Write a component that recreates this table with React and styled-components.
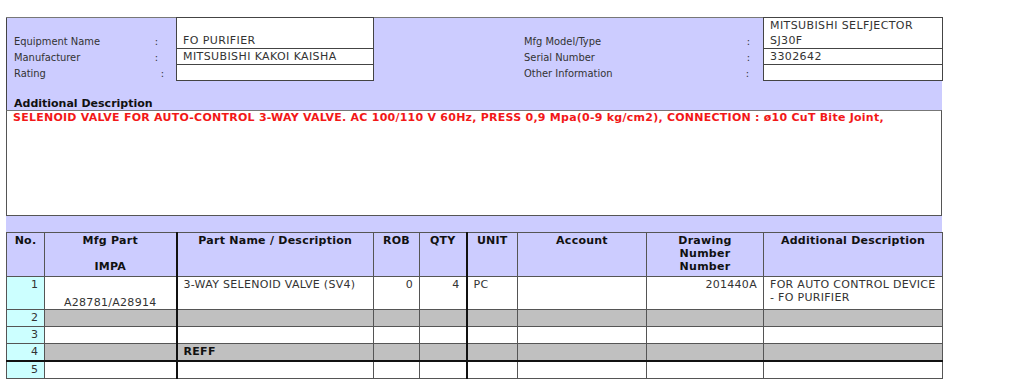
import styled, { createGlobalStyle } from "styled-components";

const GlobalStyle = createGlobalStyle`
  body {
    margin: 0;
    background: #fff;
    font-family: "DejaVu Sans", Verdana, sans-serif;
    font-size: 11px;
    color: #333;
  }
`;

const LAVENDER = "#ccccff";
const LINE = "#444";

const Page = styled.div`
  padding: 17px 0 0 6px;
  width: 936px;
`;

const InfoTable = styled.table`
  width: 936px;
  border-collapse: collapse;
  table-layout: fixed;
  background: ${LAVENDER};
  border-top: 1px solid #777;
  border-left: 1px solid ${LINE};
  td {
    padding: 0;
    vertical-align: bottom;
    line-height: 15px;
  }
`;

const LabelCell = styled.td`
  padding: 0 ${(p) => p.$colonPad || 18}px 0 ${(p) => p.$indent || 7}px !important;
  font-family: "DejaVu Sans Condensed", "DejaVu Sans", sans-serif;
  span {
    display: flex;
    justify-content: space-between;
  }
`;

const ValueCell = styled.td`
  background: #fff;
  border: 1px solid ${LINE};
  padding: 0 0 0 6px !important;
  height: ${(p) => p.$h || 15}px;
  letter-spacing: 0.4px;
`;

const DescHeader = styled.div`
  background: ${LAVENDER};
  border-left: 1px solid ${LINE};
  height: 29px;
  display: flex;
  align-items: flex-end;
  padding-left: 7px;
  font-weight: bold;
  color: #111;
`;

const DescBox = styled.div`
  height: 104px;
  border: 1px solid #555;
  border-top-color: #777;
  padding: 0 6px;
  color: #f21818;
  font-weight: bold;
  line-height: 13px;
  letter-spacing: 0.25px;
`;

const Band = styled.div`
  background: ${LAVENDER};
  height: 16px;
`;

const PartsTable = styled.table`
  width: 937px;
  border-collapse: collapse;
  table-layout: fixed;
  th, td {
    border: 1px solid #555;
    padding: 1px 6px;
    line-height: 13px;
    vertical-align: top;
    overflow: hidden;
    white-space: nowrap;
  }
`;

const HeadCell = styled.th`
  background: ${LAVENDER};
  color: #111;
  font-weight: bold;
  text-align: center;
  height: 41px;
  letter-spacing: 0.25px;
  border-left: ${(p) => (p.$thick ? "2px solid #111" : undefined)} !important;
`;

const Row = styled.tr`
  background: ${(p) => (p.$grey ? "#c0c0c0" : "#fff")};
  td {
    height: ${(p) => p.$h || 14}px;
  }
  ${(p) => p.$thickTop && `td { border-top: 2px solid #111; }`}
`;

const NoCell = styled.td`
  background: #ccffff;
  text-align: right;
`;

const Cell = styled.td`
  text-align: ${(p) => p.$align || "left"};
  font-weight: ${(p) => (p.$bold ? "bold" : "normal")};
  color: ${(p) => (p.$bold ? "#111" : "#333")};
  letter-spacing: 0.3px;
  border-left: ${(p) => (p.$thick ? "2px solid #111" : undefined)} !important;
`;

/* part number sits low in its cell, under an empty first line */
const PartNoCell = styled(Cell)`
  tr & {
    padding: ${(p) => (p.$drop ? "19px 6px 0" : "1px 6px")};
    height: ${(p) => (p.$drop ? "13px" : undefined)};
  }
`;

const Colon = styled.i`
  font-style: normal;
`;

const columns = [38, 132, 197, 46, 47, 51, 129, 117, 179];

const rows = [
  {
    no: 1,
    mfg: "A28781/A28914",
    name: "3-WAY SELENOID VALVE (SV4)",
    rob: "0",
    qty: "4",
    unit: "PC",
    drawing: "201440A",
    extra: ["FOR AUTO CONTROL DEVICE", "- FO PURIFIER"],
    h: 30,
  },
  { no: 2, grey: true },
  { no: 3 },
  { no: 4, grey: true, name: "REFF", bold: true },
  { no: 5, thickTop: true },
];

const info = [
  ["Equipment Name", "FO PURIFIER", "Mfg Model/Type", ["MITSUBISHI SELFJECTOR", "SJ30F"], 18, 13, 28],
  ["Manufacturer", "MITSUBISHI KAKOI KAISHA", "Serial Number", ["3302642"], 18, 13, 15],
  ["Rating", "", "Other Information", [], 12, 14, 15],
];

export default function App() {
  return (
    <>
      <GlobalStyle />
      <Page>
        <InfoTable>
          <colgroup>
            <col style={{ width: 170 }} />
            <col style={{ width: 197 }} />
            <col style={{ width: 390 }} />
            <col style={{ width: 179 }} />
          </colgroup>
          <tbody>
            {info.map(([l1, v1, l2, v2, pad1, pad2, h]) => (
              <tr key={l1}>
                <LabelCell $colonPad={pad1}>
                  <span>
                    {l1}
                    <Colon>:</Colon>
                  </span>
                </LabelCell>
                <ValueCell $h={h}>{v1}</ValueCell>
                <LabelCell $indent={150} $colonPad={pad2}>
                  <span>
                    {l2}
                    <Colon>:</Colon>
                  </span>
                </LabelCell>
                <ValueCell $h={h}>
                  {v2.map((t) => (
                    <div key={t}>{t}</div>
                  ))}
                </ValueCell>
              </tr>
            ))}
          </tbody>
        </InfoTable>

        <DescHeader>Additional Description</DescHeader>
        <DescBox>
          SELENOID VALVE FOR AUTO-CONTROL 3-WAY VALVE. AC 100/110 V 60Hz, PRESS
          0,9 Mpa(0-9 kg/cm2), CONNECTION : ø10 CuT Bite Joint,
        </DescBox>
        <Band />

        <PartsTable>
          <colgroup>
            {columns.map((w, i) => (
              <col key={i} style={{ width: w }} />
            ))}
          </colgroup>
          <thead>
            <tr>
              <HeadCell>No.</HeadCell>
              <HeadCell>
                Mfg Part
                <br />
                <br />
                IMPA
              </HeadCell>
              <HeadCell $thick>Part Name / Description</HeadCell>
              <HeadCell>ROB</HeadCell>
              <HeadCell>QTY</HeadCell>
              <HeadCell $thick>UNIT</HeadCell>
              <HeadCell>Account</HeadCell>
              <HeadCell>
                Drawing
                <br />
                Number
                <br />
                Number
              </HeadCell>
              <HeadCell>Additional Description</HeadCell>
            </tr>
          </thead>
          <tbody>
            {rows.map((r) => (
              <Row key={r.no} $grey={r.grey} $h={r.h} $thickTop={r.thickTop}>
                <NoCell>{r.no}</NoCell>
                <PartNoCell $align="center" $drop={!!r.mfg}>
                  {r.mfg}
                </PartNoCell>
                <Cell $thick $bold={r.bold}>
                  {r.name}
                </Cell>
                <Cell $align="right">{r.rob}</Cell>
                <Cell $align="right">{r.qty}</Cell>
                <Cell $thick>{r.unit}</Cell>
                <Cell />
                <Cell $align="right">{r.drawing}</Cell>
                <Cell>
                  {r.extra &&
                    r.extra.map((t, i) => (
                      <div key={i}>{t}</div>
                    ))}
                </Cell>
              </Row>
            ))}
          </tbody>
        </PartsTable>
      </Page>
    </>
  );
}
